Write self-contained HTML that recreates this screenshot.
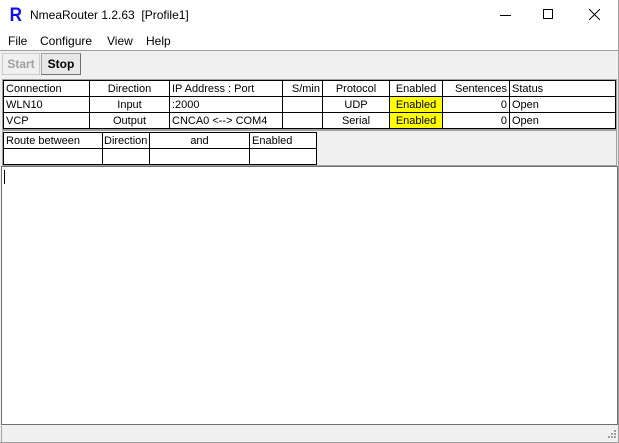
<!DOCTYPE html>
<html><head><style>
*{margin:0;padding:0;box-sizing:border-box}
body{width:619px;height:443px;background:#f0f0f0;font-family:"Liberation Sans",Arial,sans-serif;font-size:12px;color:#000;position:relative;overflow:hidden}
.a{position:absolute}
.cell{position:absolute;height:16px;line-height:17px;font-size:11px;padding:0 2px;white-space:nowrap;overflow:hidden}
.c{text-align:center}.r{text-align:right}
.vl{position:absolute;width:1px;background:#000}
.hl{position:absolute;height:1px;background:#000}
</style></head><body>
<div class="a" style="left:0;top:0;width:618px;height:50px;background:#fff"></div>
<div class="a" style="left:9px;top:5px;font:bold 19px 'Liberation Sans',sans-serif;color:#1010ee;transform:scaleX(.9)">R</div>
<div class="a" style="left:30px;top:8px;font-size:12px">NmeaRouter 1.2.63&nbsp; [Profile1]</div>
<div class="a" style="left:500px;top:15px;width:11px;height:1px;background:#000"></div>
<div class="a" style="left:543px;top:9px;width:10px;height:10px;border:1px solid #000"></div>
<svg class="a" style="left:589px;top:9px" width="11" height="11"><path d="M0 0L11 11M11 0L0 11" stroke="#000" stroke-width="1"/></svg>
<div class="a" style="left:8px;top:34px;font-size:12px">File</div>
<div class="a" style="left:40px;top:34px;font-size:12px">Configure</div>
<div class="a" style="left:107px;top:34px;font-size:12px">View</div>
<div class="a" style="left:146px;top:34px;font-size:12px">Help</div>
<div class="a" style="left:0;top:50px;width:619px;height:1px;background:#a0a0a0"></div>
<div class="a" style="left:2px;top:53px;width:38px;height:22px;border:1px solid #ccc;background:#f0f0f0;color:#a0a0a0;font-weight:bold;text-align:center;line-height:21px">Start</div>
<div class="a" style="left:41px;top:53px;width:40px;height:22px;border:1px solid #a0a0a0;border-right-color:#707070;border-bottom-color:#707070;background:#e8e8e8;font-weight:bold;text-align:center;line-height:21px">Stop</div>
<div class="a" style="left:2px;top:79px;width:615px;height:51px;border:1px solid #a0a0a0;background:#fff"></div>
<div class="hl" style="left:3px;top:80px;width:613px"></div>
<div class="hl" style="left:3px;top:96px;width:613px"></div>
<div class="hl" style="left:3px;top:112px;width:613px"></div>
<div class="hl" style="left:3px;top:128px;width:613px"></div>
<div class="vl" style="left:3px;top:80px;height:49px"></div>
<div class="vl" style="left:89px;top:80px;height:49px"></div>
<div class="vl" style="left:169px;top:80px;height:49px"></div>
<div class="vl" style="left:282px;top:80px;height:49px"></div>
<div class="vl" style="left:322px;top:80px;height:49px"></div>
<div class="vl" style="left:389px;top:80px;height:49px"></div>
<div class="vl" style="left:442px;top:80px;height:49px"></div>
<div class="vl" style="left:509px;top:80px;height:49px"></div>
<div class="vl" style="left:615px;top:80px;height:49px"></div>
<div class="a" style="left:390px;top:97px;width:52px;height:15px;background:#ffff00"></div>
<div class="a" style="left:390px;top:113px;width:52px;height:15px;background:#ffff00"></div>
<div class="cell" style="left:4px;top:81px;width:85px">Connection</div>
<div class="cell c" style="left:90px;top:81px;width:79px">Direction</div>
<div class="cell" style="left:170px;top:81px;width:112px">IP Address : Port</div>
<div class="cell r" style="left:283px;top:81px;width:39px">S/min</div>
<div class="cell c" style="left:323px;top:81px;width:66px">Protocol</div>
<div class="cell c" style="left:390px;top:81px;width:52px">Enabled</div>
<div class="cell r" style="left:443px;top:81px;width:66px">Sentences</div>
<div class="cell" style="left:510px;top:81px;width:105px">Status</div>
<div class="cell" style="left:4px;top:97px;width:85px">WLN10</div>
<div class="cell c" style="left:90px;top:97px;width:79px">Input</div>
<div class="cell" style="left:170px;top:97px;width:112px">:2000</div>
<div class="cell c" style="left:323px;top:97px;width:66px">UDP</div>
<div class="cell c" style="left:390px;top:97px;width:52px">Enabled</div>
<div class="cell r" style="left:443px;top:97px;width:66px">0</div>
<div class="cell" style="left:510px;top:97px;width:105px">Open</div>
<div class="cell" style="left:4px;top:113px;width:85px">VCP</div>
<div class="cell c" style="left:90px;top:113px;width:79px">Output</div>
<div class="cell" style="left:170px;top:113px;width:112px">CNCA0 &lt;--&gt; COM4</div>
<div class="cell c" style="left:323px;top:113px;width:66px">Serial</div>
<div class="cell c" style="left:390px;top:113px;width:52px">Enabled</div>
<div class="cell r" style="left:443px;top:113px;width:66px">0</div>
<div class="cell" style="left:510px;top:113px;width:105px">Open</div>
<div class="a" style="left:2px;top:130px;width:615px;height:36px;border:1px solid #a0a0a0;background:#f0f0f0"></div>
<div class="a" style="left:3px;top:132px;width:314px;height:33px;background:#fff"></div>
<div class="hl" style="left:3px;top:132px;width:314px"></div>
<div class="hl" style="left:3px;top:148px;width:314px"></div>
<div class="hl" style="left:3px;top:164px;width:314px"></div>
<div class="vl" style="left:3px;top:132px;height:33px"></div>
<div class="vl" style="left:102px;top:132px;height:33px"></div>
<div class="vl" style="left:149px;top:132px;height:33px"></div>
<div class="vl" style="left:249px;top:132px;height:33px"></div>
<div class="vl" style="left:316px;top:132px;height:33px"></div>
<div class="cell" style="left:4px;top:133px;width:98px">Route between</div>
<div class="cell" style="left:103px;top:133px;width:46px;padding:0 1px">Direction</div>
<div class="cell c" style="left:150px;top:133px;width:99px">and</div>
<div class="cell" style="left:250px;top:133px;width:66px">Enabled</div>
<div class="a" style="left:1px;top:166px;width:617px;height:259px;border:1px solid #707070;background:#fff"></div>
<div class="a" style="left:4px;top:170px;width:1px;height:14px;background:#000"></div>
<div class="a" style="left:618px;top:0;width:1px;height:443px;background:#a0a0a0"></div>
<div class="a" style="left:0;top:442px;width:619px;height:1px;background:#a0a0a0"></div>
<div class="a" style="left:1px;top:426px;width:1px;height:16px;background:#a0a0a0"></div>
<svg class="a" style="left:606px;top:430px" width="11" height="11"><g fill="#a0a0a0"><rect x="8" y="0" width="2" height="2"/><rect x="5" y="3" width="2" height="2"/><rect x="8" y="3" width="2" height="2"/><rect x="2" y="6" width="2" height="2"/><rect x="5" y="6" width="2" height="2"/><rect x="8" y="6" width="2" height="2"/></g></svg>
</body></html>
